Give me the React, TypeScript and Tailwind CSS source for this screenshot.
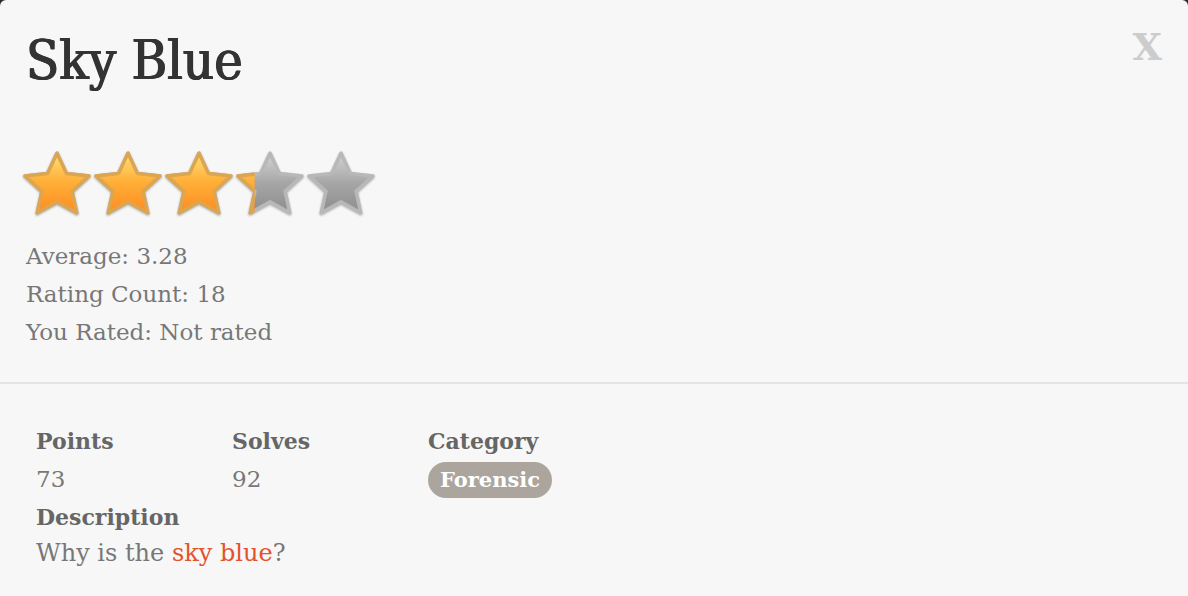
import React from "react";

const serif = { fontFamily: '"DejaVu Serif", "Liberation Serif", serif' };

function Star({ fill, id }: { fill: number; id: string }) {
  const pts =
    "50,6 63.5,35 95.6,38.6 71.5,60.5 78.2,91.2 50,75.5 21.8,91.2 28.5,60.5 4.4,38.6 36.5,35";
  return (
    <svg width="70" height="70" viewBox="0 0 100 100" className="drop-shadow-[0_1px_1px_rgba(0,0,0,0.3)]">
      <defs>
        <linearGradient id={`g-${id}`} x1="0" y1="0" x2="0" y2="1">
          <stop offset="0" stopColor="#d4d4d4" />
          <stop offset="0.5" stopColor="#a6a6a6" />
          <stop offset="1" stopColor="#8c8c8c" />
        </linearGradient>
        <linearGradient id={`o-${id}`} x1="0" y1="0" x2="0" y2="1">
          <stop offset="0" stopColor="#ffe07a" />
          <stop offset="0.45" stopColor="#ffb23a" />
          <stop offset="1" stopColor="#ff8a1f" />
        </linearGradient>
        <clipPath id={`c-${id}`}>
          <rect x="0" y="0" width={fill * 100} height="100" />
        </clipPath>
      </defs>
      <polygon points={pts} fill={`url(#g-${id})`} stroke="#b8b8b8" strokeWidth="5" strokeLinejoin="round" />
      {fill > 0 && (
        <polygon
          points={pts}
          fill={`url(#o-${id})`}
          stroke="#dca550"
          strokeWidth="5"
          strokeLinejoin="round"
          clipPath={`url(#c-${id})`}
        />
      )}
    </svg>
  );
}

export default function App() {
  const avg = 3.28;
  return (
    <div className="min-h-screen bg-[#2b2b2b]" style={serif}>
      <div className="h-[596px] overflow-hidden rounded-t-[6px] bg-[#f7f7f7]">
        <div className="flex items-start justify-between px-[26px] pt-[29px]">
          <h1
            className="text-[54px] leading-[1.2] text-[#333] [text-shadow:0.7px_0_0_#333,-0.7px_0_0_#333]"
            style={{ fontStretch: "condensed" }}
          >
            Sky Blue
          </h1>
          <button className="mt-[-1px] text-[38px] font-bold leading-none text-[#cccccc]">X</button>
        </div>

        <div className="px-[22px] pt-[55px]">
          <div className="flex gap-[1px]">
            {[0, 1, 2, 3, 4].map((i) => (
              <Star key={i} id={`s${i}`} fill={Math.max(0, Math.min(1, avg - i))} />
            ))}
          </div>
        </div>

        <div className="px-[26px] pt-[18px] text-[23px] leading-[38px] text-[#777]">
          <div>Average: 3.28</div>
          <div>Rating Count: 18</div>
          <div>You Rated: Not rated</div>
        </div>

        <div className="mt-[31px] border-t-2 border-[#e4e4e4]" />

        <div className="px-[36px] pt-[38px] text-[23px] leading-[38px] text-[#777]">
          <div className="grid grid-cols-[196px_196px_196px]">
            <div>
              <div className="text-[22px] font-bold text-[#666]">Points</div>
              <div>73</div>
            </div>
            <div>
              <div className="text-[22px] font-bold text-[#666]">Solves</div>
              <div>92</div>
            </div>
            <div>
              <div className="text-[22px] font-bold text-[#666]">Category</div>
              <span className="inline-block rounded-full bg-[#aba59d] px-[12px] text-[21px] font-bold leading-[36px] text-white">
                Forensic
              </span>
            </div>
          </div>
          <div className="text-[22px] font-bold text-[#666]">Description</div>
          <div className="text-[24px] leading-[34px]">
            Why is the <a className="text-[#e4522b]">sky blue</a>?
          </div>
        </div>
      </div>
    </div>
  );
}
